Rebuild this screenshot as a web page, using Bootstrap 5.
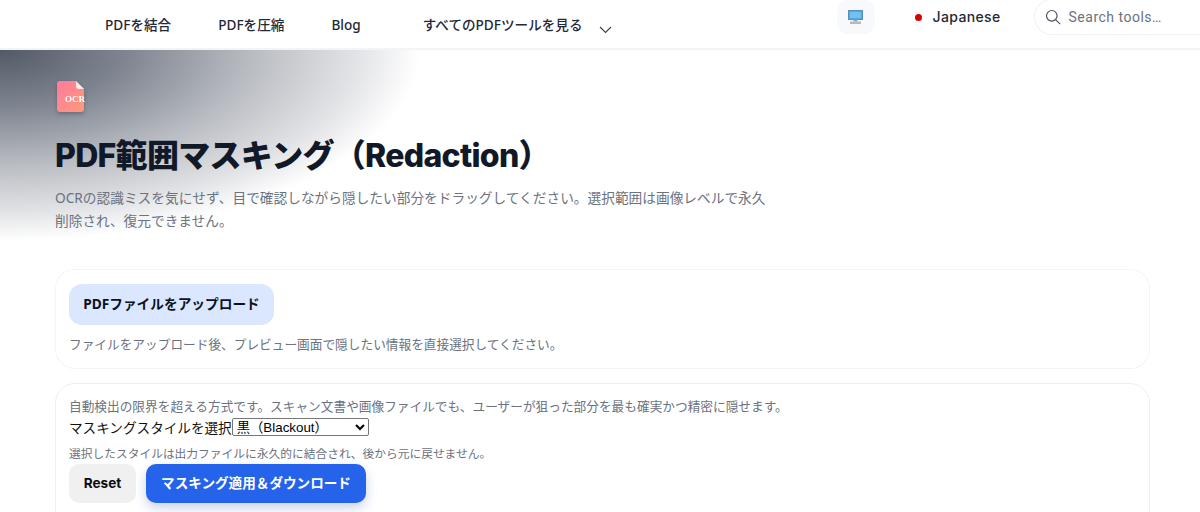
<!DOCTYPE html>
<html lang="ja">
<head>
<meta charset="utf-8">
<title>PDF範囲マスキング</title>
<link href="https://cdn.jsdelivr.net/npm/bootstrap@5.3.0/dist/css/bootstrap.min.css" rel="stylesheet">
<style>
html,body{height:512px;overflow:hidden}
body{font-family:"Inter","Noto Sans CJK JP",sans-serif;color:#111827;background:#fff}
.topbar{height:50px;border-bottom:2px solid #f3f4f6;padding-left:105px;overflow:hidden}
.toplink{font-size:13.6px;font-weight:500;color:#1f2937;text-decoration:none;font-family:"Noto Sans","Noto Sans CJK JP",sans-serif;line-height:20px;margin-top:15px;white-space:nowrap;flex-shrink:0}
.gap-a{margin-left:47px}
.gap-b{margin-left:62px}
.chev{margin:26px 0 0 16px;flex-shrink:0}
.tile{width:38px;height:34px;border-radius:10px;background:#f8f9fd;margin-left:225px;flex-shrink:0}
.langdot{width:7px;height:7px;border-radius:50%;background:#d90000;margin-left:40px;margin-top:14px;flex-shrink:0}
.langname{font-family:"Inter",sans-serif;font-size:14px;font-weight:500;letter-spacing:.35px;margin-left:11px;margin-top:6px;color:#1f2937;flex-shrink:0}
.searchbox{width:170px;height:36px;margin-left:33px;margin-top:-1px;border:1px solid #f1f2f4;border-right:0;border-radius:18px 0 0 18px;padding-left:10px;gap:8px;color:#6b7280;font-family:"Roboto",sans-serif;font-size:14px;letter-spacing:.5px;flex-shrink:0;white-space:nowrap}
.hero{height:219px;padding:31px 55px 0;background:radial-gradient(ellipse 420px 191px at 0 0,#525a66 0,#7f8590 30%,#b9bcc2 60%,#e2e3e6 85%,#fff 100%) no-repeat}
.ocr{display:block;margin-left:2px;margin-bottom:19px;filter:drop-shadow(0 2px 2px rgba(0,0,0,.25))}
.hero h1{font-size:32px;font-weight:800;line-height:48px;margin:0 0 6px;color:#111827;letter-spacing:-.7px}
.hero p{font-size:13.7px;line-height:23px;color:#6b7280;width:718px;margin:0;font-family:"Noto Sans","Noto Sans CJK JP",sans-serif}
.panel{margin:0 50px 14px 55px;border-radius:20px;padding:14px 13px}
.panel-a{height:100px;border:1px dotted #e8e9ec}
.panel-b{height:200px;border:1px solid #eeeff1;padding-top:12px}
.upbtn{background:#dbe7fe;color:#0b1220;font-size:13.7px;font-weight:700;border:0;border-radius:13px;width:205px;height:41px;padding:0;margin-bottom:9px;font-family:"Noto Sans","Noto Sans CJK JP",sans-serif}
.hint{font-size:12.68px;color:#6b7280;line-height:20px;margin:0;font-family:"Noto Sans CJK JP",sans-serif}
.hint-sm{font-size:11.74px;line-height:16px;margin:5px 0 3px}
.stylerow{font-size:13.6px;line-height:22px;color:#111;margin-top:2px;font-family:"Liberation Sans","Noto Sans CJK JP",sans-serif}
.stylesel{width:137px;height:18px;font-size:13.33px;font-family:"Liberation Sans","Noto Sans CJK JP",sans-serif;padding:0;background:#fff;color:#000;border:1px solid #767676;border-radius:2px;vertical-align:1px}
.resetbtn,.applybtn{height:39px;font-size:13.6px;font-weight:700;border:0;border-radius:10px;padding:0}
.resetbtn{width:67px;background:#f0f0f0;color:#0b0b0b}
.applybtn{width:220px;background:#2563eb;color:#fff;box-shadow:0 6px 14px rgba(37,99,235,.14),0 4px 10px rgba(0,0,0,.1)}
.btnrow{gap:10px}
</style>
</head>
<body>
<nav class="topbar d-flex align-items-start">
  <a class="toplink" href="#">PDFを結合</a>
  <a class="toplink gap-a" href="#">PDFを圧縮</a>
  <a class="toplink gap-a" href="#">Blog</a>
  <a class="toplink gap-b" href="#">すべてのPDFツールを見る</a>
  <svg class="chev" width="13" height="8" viewBox="0 0 13 8" fill="none" stroke="#374151" stroke-width="1.1"><path d="M1 1l5.5 5.5L12 1"/></svg>
  <div class="tile d-flex align-items-center justify-content-center">
    <svg width="15" height="14" viewBox="0 0 15 14"><rect x=".5" y=".5" width="14" height="9" fill="#4fa9e8" stroke="#5b8fb5"/><rect x="2" y="2" width="11" height="6" fill="#6ec1f2"/><rect x="5.5" y="9.5" width="4" height="2" fill="#9aa3ad"/><rect x="2" y="11.5" width="11" height="2.5" fill="#b4b9c0"/></svg>
  </div>
  <span class="langdot"></span>
  <span class="langname">Japanese</span>
  <div class="searchbox d-flex align-items-center">
    <svg width="16" height="16" viewBox="0 0 16 16" fill="none" stroke="#4b5563" stroke-width="1.2"><circle cx="6.8" cy="6.8" r="5.3"/><path d="M10.8 10.8l4.4 4.4"/></svg>
    <span>Search tools…</span>
  </div>
</nav>
<section class="hero">
  <svg class="ocr" width="29" height="32" viewBox="0 0 29 32">
    <defs><linearGradient id="og" x1="0" y1="0" x2="1" y2="1"><stop offset="0" stop-color="#ff7a9c"/><stop offset="1" stop-color="#ff9a7a"/></linearGradient></defs>
    <path d="M3 0h16l8 8v20a3 3 0 0 1-3 3H3a3 3 0 0 1-3-3V3a3 3 0 0 1 3-3z" fill="url(#og)"/>
    <path d="M19 0v5a3 3 0 0 0 3 3h5z" fill="#ffe9ec"/>
    <text x="8" y="21" font-family="Liberation Serif,serif" font-size="9" font-weight="700" fill="#fff">OCR</text>
  </svg>
  <h1>PDF範囲マスキング（Redaction）</h1>
  <p>OCRの認識ミスを気にせず、目で確認しながら隠したい部分をドラッグしてください。選択範囲は画像レベルで永久削除され、復元できません。</p>
</section>
<div class="panel panel-a">
  <button class="upbtn d-block" type="button">PDFファイルをアップロード</button>
  <p class="hint">ファイルをアップロード後、プレビュー画面で隠したい情報を直接選択してください。</p>
</div>
<div class="panel panel-b">
  <p class="hint">自動検出の限界を超える方式です。スキャン文書や画像ファイルでも、ユーザーが狙った部分を最も確実かつ精密に隠せます。</p>
  <div class="stylerow">マスキングスタイルを選択<select class="stylesel"><option>黒（Blackout）</option></select></div>
  <p class="hint hint-sm">選択したスタイルは出力ファイルに永久的に結合され、後から元に戻せません。</p>
  <div class="d-flex btnrow">
    <button class="resetbtn" type="button">Reset</button>
    <button class="applybtn" type="button">マスキング適用＆ダウンロード</button>
  </div>
</div>
</body>
</html>
